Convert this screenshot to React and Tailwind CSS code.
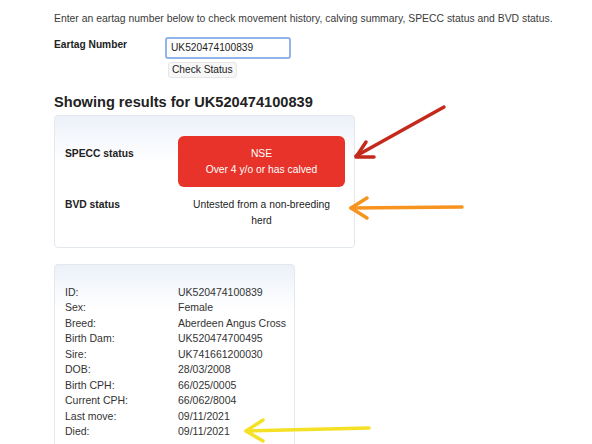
import React from "react";

const details = [
    ["ID:", "UK520474100839"],
    ["Sex:", "Female"],
    ["Breed:", "Aberdeen Angus Cross"],
    ["Birth Dam:", "UK520474700495"],
    ["Sire:", "UK741661200030"],
    ["DOB:", "28/03/2008"],
    ["Birth CPH:", "66/025/0005"],
    ["Current CPH:", "66/062/8004"],
    ["Last move:", "09/11/2021"],
    ["Died:", "09/11/2021"],
];

// annotation arrows drawn over the page
const Arrows = () => (
    <svg
        className="absolute left-0 top-0 pointer-events-none"
        width="592"
        height="444"
        viewBox="0 0 592 444"
    >
        <g fill="none" strokeLinecap="round" strokeLinejoin="round">
            <g stroke="#c4291b" strokeWidth="3.5">
                <path d="M444 107 L356 156" />
                <path d="M366 142 L356 157 L374 157" />
            </g>
            <g stroke="#f7941f" strokeWidth="3.5">
                <path d="M462 207 L351 208" />
                <path d="M367 198 L351 208 L367 218" />
            </g>
            <g stroke="#f4e025" strokeWidth="3.5">
                <path d="M369 428 L246 431" />
                <path d="M263 420 L246 431 L263 441" />
            </g>
        </g>
    </svg>
);

const App = () => {
    return (
        <div
            className="relative w-[592px] h-[444px] overflow-hidden bg-white text-[#333] pl-[54px] pt-[12px]"
            style={{ fontFamily: '"Liberation Sans", Arial, sans-serif' }}
        >
            <p className="text-[10.4px] leading-[14px] whitespace-nowrap text-[#3a3a3a]">
                Enter an eartag number below to check movement history, calving summary, SPECC status and BVD status.
            </p>

            <div className="flex mt-[11px]">
                <div className="w-[111px] text-[10.2px] leading-[14px] font-bold text-[#222] pt-[1px]">Eartag Number</div>
                <div className="flex flex-col items-start">
                    <div className="w-[126px] h-[22px] border-2 border-[#93b4ea] rounded-[3px] flex items-center px-[4px] text-[10.2px] text-[#222]">
                        UK520474100839
                    </div>
                    <button className="mt-[3px] ml-[3px] h-[16px] px-[3px] text-[10.2px] leading-[14px] text-[#222] bg-[#f7f7f7] border border-[#e6e6e6] rounded-[3px]">
                        Check Status
                    </button>
                </div>
            </div>

            <h2 className="mt-[15px] text-[14.6px] leading-[18px] font-bold text-[#222]">
                Showing results for UK520474100839
            </h2>

            <div className="mt-[4px] w-[301px] h-[133px] rounded-[4px] border border-[#e3e8ef] bg-[linear-gradient(to_bottom,#ecf1f9,#ffffff_45px)] pt-[20px] pl-[10px]">
                <div className="flex">
                    <div className="w-[113px] pt-[11px] text-[10.3px] leading-[14px] font-bold text-[#222]">SPECC status</div>
                    <div className="w-[167px] h-[51px] rounded-[6px] bg-[#e8332a] text-white text-[10.3px] leading-[15.5px] flex flex-col items-center justify-center">
                        <span>NSE</span>
                        <span>Over 4 y/o or has calved</span>
                    </div>
                </div>
                <div className="flex mt-[10px]">
                    <div className="w-[113px] text-[10.3px] leading-[15.5px] font-bold text-[#222]">BVD status</div>
                    <div className="w-[167px] px-[8px] text-center text-[10.3px] leading-[15.5px] text-[#222]">
                        Untested from a non-breeding herd
                    </div>
                </div>
            </div>

            <div className="mt-[16px] w-[241px] h-[200px] rounded-[4px] border border-[#e3e8ef] bg-[linear-gradient(to_bottom,#ecf1f9,#ffffff_45px)] pt-[20px] pl-[10px]">
                {details.map(([label, value]) => (
                    <div key={label} className="flex text-[10.5px] leading-[15.45px] text-[#333]">
                        <span className="w-[113px]">{label}</span>
                        <span>{value}</span>
                    </div>
                ))}
            </div>

            <Arrows />
        </div>
    );
};

export default App;
